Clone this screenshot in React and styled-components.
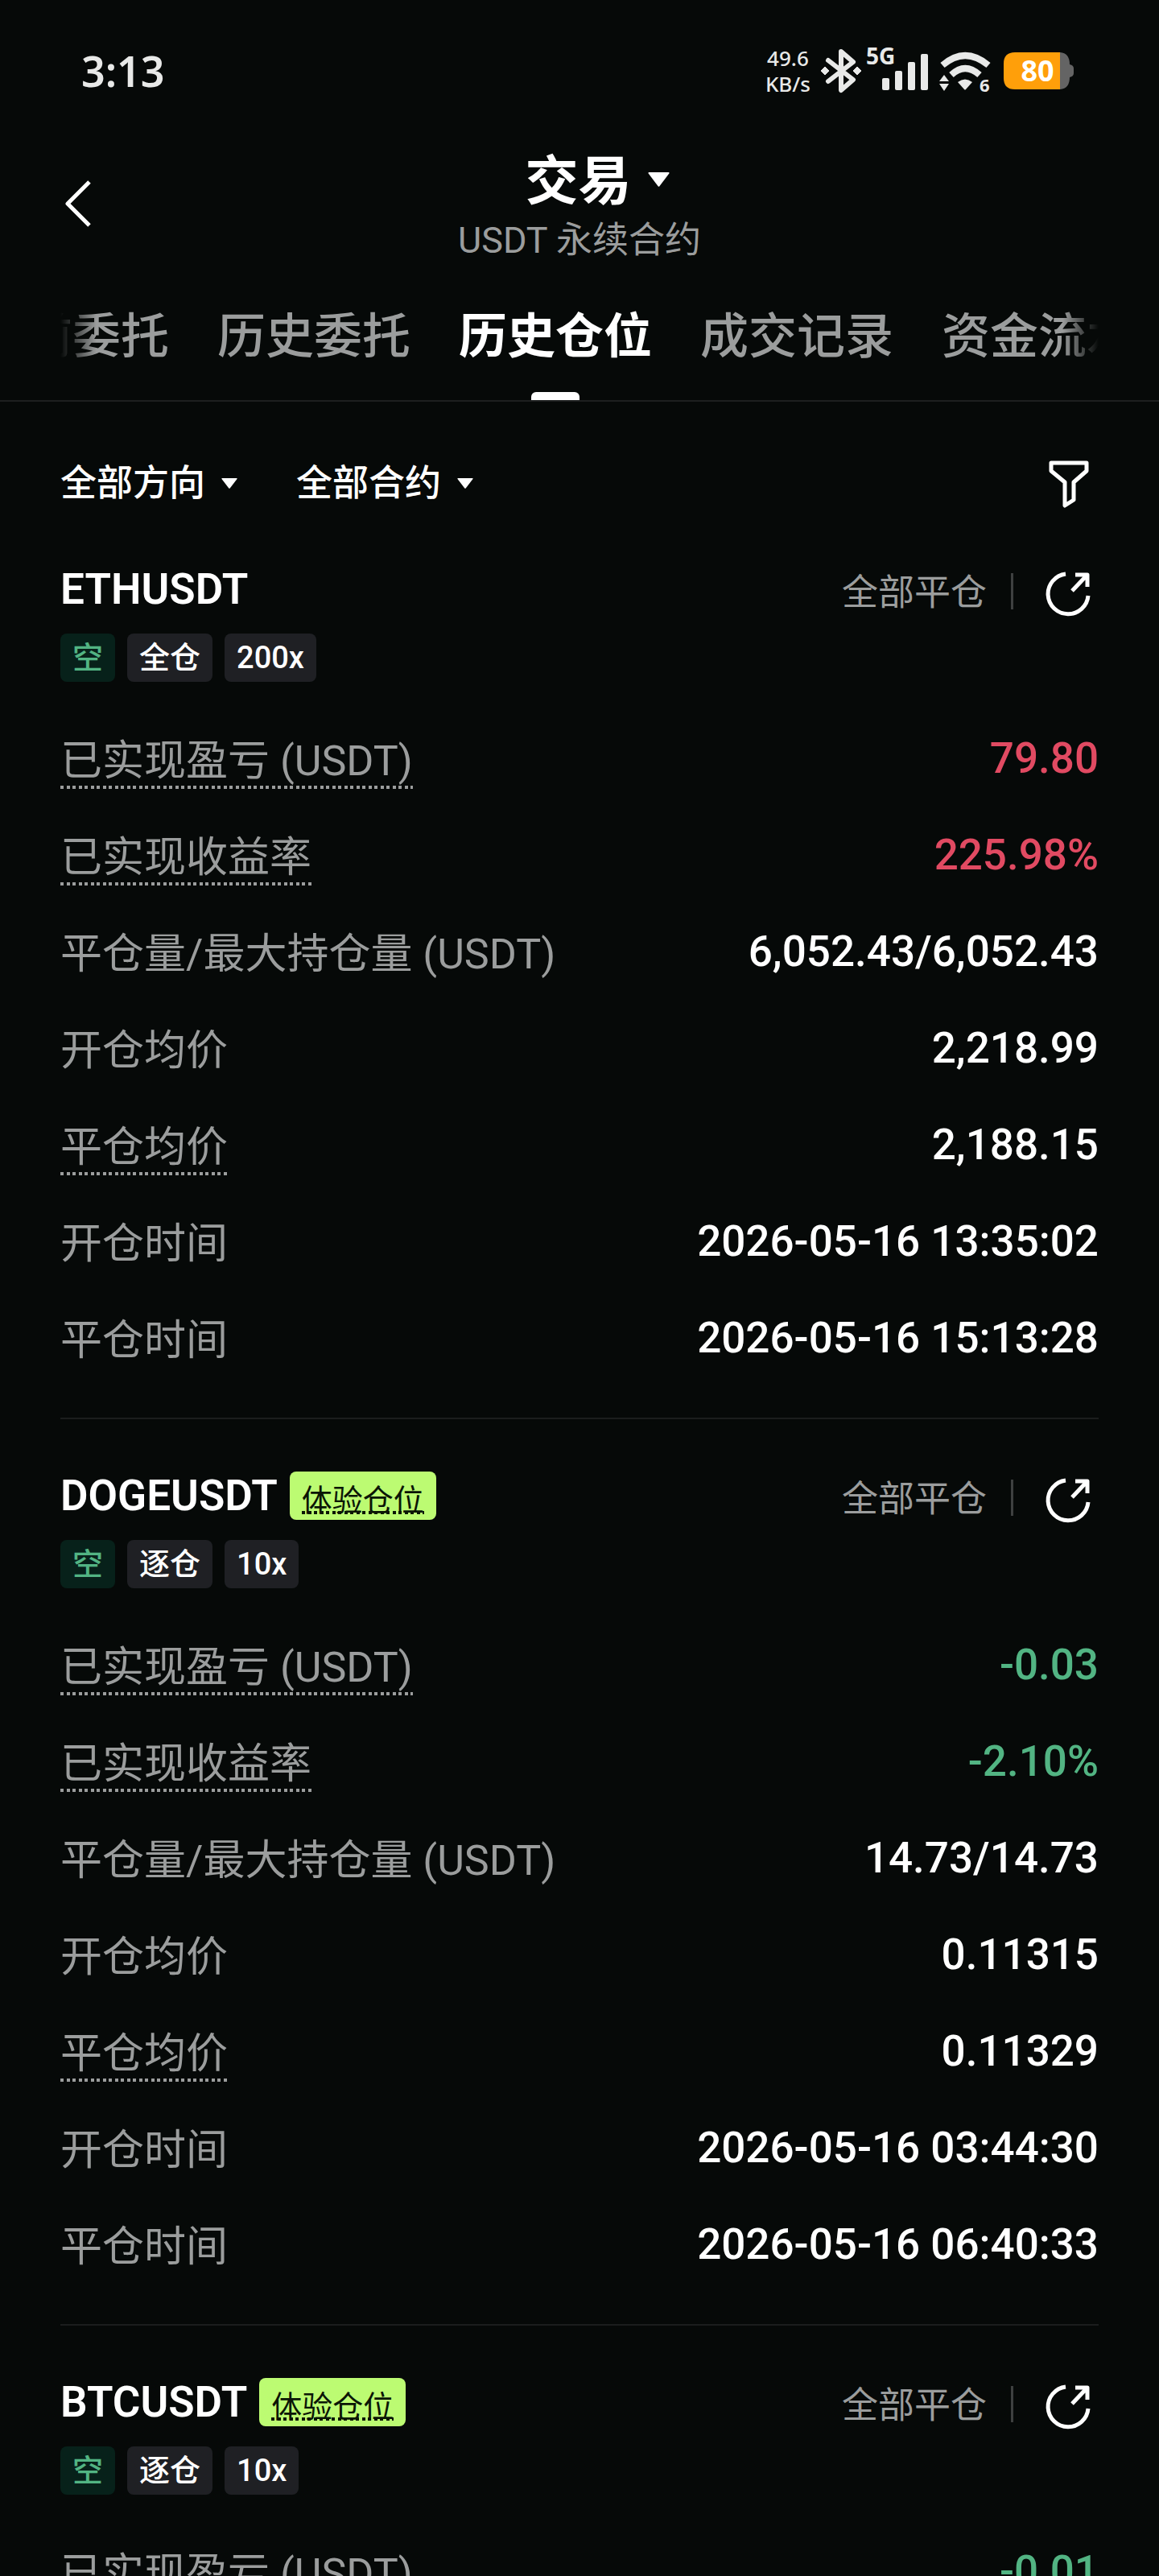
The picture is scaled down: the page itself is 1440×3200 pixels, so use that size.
import { useEffect, useRef, useState } from "react"
import styled, { createGlobalStyle } from "styled-components"

const GlobalStyle = createGlobalStyle`
    * { box-sizing: border-box; }
    body {
        margin: 0;
        background: #060908;
        color: #fff;
        font-family: Roboto, "Noto Sans CJK SC", sans-serif;
    }
    button, select {
        margin: 0;
        padding: 0;
        border: 0;
        background: none;
        color: inherit;
        font: inherit;
        cursor: pointer;
    }
    svg { display: block; flex: none; overflow: visible; }
`;

const dots = color => `
    background-image: linear-gradient(90deg,
        ${color} 4px, transparent 4px, transparent 8px,
        ${color} 8px, ${color} 12px, transparent 12px);
    background-size: 15px 4px;
    background-repeat: repeat-x;
`;

const Screen = styled.div`
    display: flex;
    flex-direction: column;
    height: 100vh;
    overflow: hidden;
`;

/* ---------- status bar ---------- */

const StatusBar = styled.div`
    display: flex;
    align-items: center;
    justify-content: space-between;
    height: 176px;
    padding: 0 106px 0 101px;
    color: #e8e9e8;
`;

const Clock = styled.time`
    font-family: "Noto Sans", sans-serif;
    font-size: 52px;
    font-weight: 600;
    line-height: 72px;
`;

const StatusIcons = styled.div`
    display: flex;
    align-items: center;
    gap: 13px;
`;

const Radios = styled.div`
    display: flex;
    gap: 6px;
`;

const NetSpeed = styled.div`
    font-family: "Noto Sans", sans-serif;
    font-size: 26px;
    font-weight: 500;
    line-height: 32px;
    text-align: center;
`;

/* ---------- header ---------- */

const Header = styled.header`
    display: grid;
    grid-template-columns: 60px 1fr 60px;
    align-items: center;
    padding: 0 75px;
`;

const BackButton = styled.button`
    justify-self: start;
    padding: 0 6px;
`;

const Heading = styled.div`
    display: flex;
    flex-direction: column;
    align-items: center;
    padding: 5px 0 2px;
`;

const TitleButton = styled.button`
    display: flex;
    align-items: center;
    gap: 20px;
    margin-left: 44px;
    font-size: 66px;
    font-weight: 700;
    line-height: 90px;

    svg { margin-bottom: 6px; }
`;

const Subtitle = styled.p`
    margin: 0;
    color: #9b9d9d;
    font-size: 45px;
    line-height: 56px;
`;

/* ---------- tabs ---------- */

const TabBar = styled.nav`
    padding: 0 75px;
    border-bottom: 2px solid #1d1f1f;
`;

const TabScroller = styled.div`
    display: flex;
    gap: 60px;
    overflow-x: auto;
    scrollbar-width: none;
    mask-image: linear-gradient(90deg, transparent, #000 45px, #000 calc(100% - 45px), transparent);
`;

const Tab = styled.button`
    display: flex;
    flex: none;
    flex-direction: column;
    align-items: center;
    justify-content: space-between;
    height: 168px;
    padding-top: 45px;
    color: ${({ $active }) => ($active ? "#fff" : "#9b9d9d")};
    font-size: 60px;
    font-weight: ${({ $active }) => ($active ? 700 : 500)};
    line-height: 90px;

    &::after {
        content: "";
        width: 60px;
        height: 10px;
        border-radius: 6px 6px 0 0;
        background: ${({ $active }) => ($active ? "#fff" : "transparent")};
    }
`;

/* ---------- filters ---------- */

const Filters = styled.div`
    display: flex;
    align-items: center;
    gap: 73px;
    height: 203px;
    padding: 0 75px;
`;

const FilterField = styled.label`
    display: flex;
    align-items: center;
    gap: 20px;
`;

const FilterSelect = styled.select`
    appearance: none;
    field-sizing: content;
    outline: none;
    font-size: 45px;
    font-weight: 500;
    line-height: 66px;
`;

const FilterButton = styled.button`
    margin-left: auto;
    padding-right: 12px;
`;

/* ---------- positions ---------- */

const List = styled.main`
    flex: 1;
    min-height: 0;
    padding: 0 75px;
    overflow-y: auto;
    scrollbar-width: none;
`;

const Card = styled.article`
    padding-bottom: 37px;
    border-bottom: 2px solid #1b1d1d;

    & + & { padding-top: 65px; }
`;

const CardHead = styled.div`
    display: flex;
    align-items: center;
    justify-content: space-between;
    height: 60px;
`;

const Symbol = styled.h2`
    display: flex;
    align-items: center;
    gap: 15px;
    margin: 0;
    font-size: 53px;
    font-weight: 600;
    line-height: 60px;
`;

const TrialBadge = styled.span`
    height: 60px;
    padding: 7px 15px 0;
    border-radius: 8px;
    background: #bcfb72;
    color: #0b1606;
    font-size: 38px;
    font-weight: 400;
    line-height: 58px;

    span {
        display: block;
        height: 46px;
        ${dots("#0b1606")}
        background-position: left bottom;
    }
`;

const CardState = styled.div`
    display: flex;
    align-items: center;
    height: 60px;
    padding-top: 4px;
    color: #9b9d9d;
    font-size: 45px;
    line-height: 60px;
`;

const StateText = styled.span`
    padding-top: 6px;
`;

const Separator = styled.span`
    width: 3px;
    height: 45px;
    margin: 0 39px 0 30px;
    background: #3e4040;
`;

const ShareButton = styled.button`
    padding: 6px 9px 0 0;
    color: #fff;
`;

const Tags = styled.div`
    display: flex;
    gap: 15px;
    margin: 25px 0 37px;
`;

const Tag = styled.span`
    height: 60px;
    padding: 0 15px;
    border-radius: 8px;
    background: ${({ $short }) => ($short ? "#07211a" : "#1f2024")};
    color: ${({ $short }) => ($short ? "#52b483" : "#fff")};
    font-size: 38px;
    font-weight: 500;
    line-height: 60px;
`;

const Rows = styled.dl`
    margin: 0;
`;

const Row = styled.div`
    display: flex;
    align-items: center;
    justify-content: space-between;
    height: 120px;
`;

const Label = styled.dt`
    height: 71px;
    color: #9b9d9d;
    font-size: 52px;
    line-height: 74px;
    ${({ $hint }) => $hint && dots("#9b9d9d")}
    background-position: left bottom;
`;

const valueColors = {
    up: "#e14a62",
    down: "#52b483",
};

const Value = styled.dd`
    margin: 0;
    padding-bottom: 4px;
    color: ${({ $tone }) => valueColors[$tone] || "#fff"};
    font-size: 53px;
    font-weight: 500;
    line-height: 68px;
`;

/* ---------- icons ---------- */

const Caret = ({ width, height }) => (
    <svg width={width} height={height} viewBox="0 0 20 13" preserveAspectRatio="none" aria-hidden="true">
        <path d="M1 0h18q1 0 .5 1L10.700 12.400q-.7.800-1.400 0L.5 1Q0 0 1 0z" fill="#fff" />
    </svg>
)

const BluetoothIcon = () => (
    <svg width="50" height="54" viewBox="0 0 50 54" aria-hidden="true">
        <path d="M9 14l31 24-15 13V3l15 13L9 40" fill="none" stroke="currentColor" strokeWidth="6" strokeLinecap="round" strokeLinejoin="round" />
        <path d="M5 22l5 5-5 5-5-5zM45 22l5 5-5 5-5-5z" fill="currentColor" stroke="currentColor" strokeLinejoin="round" />
    </svg>
)

const SignalIcon = () => (
    <svg width="78" height="54" viewBox="0 0 78 54" fill="currentColor" aria-label="5G">
        <text x="0" y="19" fontFamily="Noto Sans, sans-serif" fontSize="28" fontWeight="700">5G</text>
        <rect x="20" y="36" width="9" height="15" rx="2" />
        <rect x="36" y="27" width="9" height="24" rx="2" />
        <rect x="52" y="16" width="9" height="35" rx="2" />
        <rect x="68" y="6" width="9" height="45" rx="2" />
    </svg>
)

const WifiIcon = () => (
    <svg width="67" height="54" viewBox="0 0 67 54" aria-label="Wi-Fi 6">
        <path d="M4 20q28-24 57 0" fill="none" stroke="currentColor" strokeWidth="8" />
        <path d="M15 32q17-16 35 0" fill="none" stroke="currentColor" strokeWidth="8" />
        <path d="M23 41q9-7 18 0l-8 9q-1 1-2 0z" fill="currentColor" />
        <path d="M6 32l6 8H0zM6 52l6-9H0z" fill="currentColor" />
        <text x="50" y="53" fill="currentColor" fontFamily="Noto Sans, sans-serif" fontSize="22" fontWeight="700">6</text>
    </svg>
)

const BatteryIcon = () => (
    <svg width="87" height="46" viewBox="0 0 87 46" aria-label="80%">
        <path d="M66 0h4q12 1 12 15 5 1 5 5v6q0 4-5 5 0 14-12 15h-4z" fill="#646464" />
        <path d="M14 0h56v46H14Q0 46 0 32V14Q0 0 14 0z" fill="#ff9f0a" />
        <text x="42" y="36" textAnchor="middle" fill="#fff" fontFamily="Noto Sans, sans-serif" fontSize="36" fontWeight="700">80</text>
    </svg>
)

const BackIcon = () => (
    <svg width="32" height="58" viewBox="0 0 32 58" fill="none" stroke="#fff" strokeWidth="5" strokeLinejoin="round" aria-hidden="true">
        <path d="M30 2L3 29l27 27" />
    </svg>
)

const FunnelIcon = () => (
    <svg width="50" height="60" viewBox="0 0 50 60" fill="none" stroke="#fff" strokeWidth="5" strokeLinejoin="round" aria-hidden="true">
        <path d="M3 4h44v10L31 28v22l-11 7V28L3 14z" />
    </svg>
)

const ShareIcon = () => (
    <svg width="58" height="58" viewBox="0 0 58 58" fill="none" stroke="currentColor" strokeWidth="5" aria-hidden="true">
        <path d="M26 5A25 25 0 1 0 54 32" />
        <path d="M38 6h15v15M53 6L34 26" strokeLinejoin="round" />
    </svg>
)

/* ---------- data ---------- */

const tabs = ["当前委托", "历史委托", "历史仓位", "成交记录", "资金流水"]

const positions = [
    {
        symbol: "ETHUSDT",
        margin: "全仓",
        leverage: "200x",
        rows: [
            { label: "已实现盈亏 (USDT)", value: "79.80", tone: "up", hint: true },
            { label: "已实现收益率", value: "225.98%", tone: "up", hint: true },
            { label: "平仓量/最大持仓量 (USDT)", value: "6,052.43/6,052.43" },
            { label: "开仓均价", value: "2,218.99" },
            { label: "平仓均价", value: "2,188.15", hint: true },
            { label: "开仓时间", value: "2026-05-16 13:35:02" },
            { label: "平仓时间", value: "2026-05-16 15:13:28" },
        ],
    },
    {
        symbol: "DOGEUSDT",
        trial: true,
        margin: "逐仓",
        leverage: "10x",
        rows: [
            { label: "已实现盈亏 (USDT)", value: "-0.03", tone: "down", hint: true },
            { label: "已实现收益率", value: "-2.10%", tone: "down", hint: true },
            { label: "平仓量/最大持仓量 (USDT)", value: "14.73/14.73" },
            { label: "开仓均价", value: "0.11315" },
            { label: "平仓均价", value: "0.11329", hint: true },
            { label: "开仓时间", value: "2026-05-16 03:44:30" },
            { label: "平仓时间", value: "2026-05-16 06:40:33" },
        ],
    },
    {
        symbol: "BTCUSDT",
        trial: true,
        margin: "逐仓",
        leverage: "10x",
        rows: [
            { label: "已实现盈亏 (USDT)", value: "-0.01", tone: "down", hint: true },
        ],
    },
]

const Position = ({ symbol, trial, margin, leverage, rows }) => (
    <Card>
        <CardHead>
            <Symbol>
                {symbol}
                {trial && <TrialBadge><span>体验仓位</span></TrialBadge>}
            </Symbol>
            <CardState>
                <StateText>全部平仓</StateText>
                <Separator />
                <ShareButton type="button" aria-label="分享"><ShareIcon /></ShareButton>
            </CardState>
        </CardHead>
        <Tags>
            <Tag $short>空</Tag>
            <Tag>{margin}</Tag>
            <Tag>{leverage}</Tag>
        </Tags>
        <Rows>
            {rows.map(({ label, value, tone, hint }) => (
                <Row key={label}>
                    <Label $hint={hint}>{label}</Label>
                    <Value $tone={tone}>{value}</Value>
                </Row>
            ))}
        </Rows>
    </Card>
)

const App = () => {
    const [active, setActive] = useState("历史仓位")
    const scroller = useRef(null)

    useEffect(() => {
        scroller.current.scrollLeft = 105
    }, [])

    return (
        <Screen>
            <GlobalStyle />
            <StatusBar>
                <Clock>3:13</Clock>
                <StatusIcons>
                    <NetSpeed>49.6<br />KB/s</NetSpeed>
                    <Radios>
                        <BluetoothIcon />
                        <SignalIcon />
                    </Radios>
                    <WifiIcon />
                    <BatteryIcon />
                </StatusIcons>
            </StatusBar>
            <Header>
                <BackButton type="button" aria-label="返回"><BackIcon /></BackButton>
                <Heading>
                    <TitleButton type="button">交易<Caret width={27} height={18} /></TitleButton>
                    <Subtitle>USDT 永续合约</Subtitle>
                </Heading>
            </Header>
            <TabBar>
                <TabScroller ref={scroller} role="tablist">
                    {tabs.map(tab => (
                        <Tab
                            key={tab}
                            type="button"
                            role="tab"
                            aria-selected={tab === active}
                            $active={tab === active}
                            onClick={() => setActive(tab)}
                        >
                            {tab}
                        </Tab>
                    ))}
                </TabScroller>
            </TabBar>
            <Filters>
                <FilterField>
                    <FilterSelect aria-label="方向"><option>全部方向</option></FilterSelect>
                    <Caret width={20} height={13} />
                </FilterField>
                <FilterField>
                    <FilterSelect aria-label="合约"><option>全部合约</option></FilterSelect>
                    <Caret width={20} height={13} />
                </FilterField>
                <FilterButton type="button" aria-label="筛选"><FunnelIcon /></FilterButton>
            </Filters>
            <List>
                {positions.map(position => <Position key={position.symbol} {...position} />)}
            </List>
        </Screen>
    )
}

export default App
